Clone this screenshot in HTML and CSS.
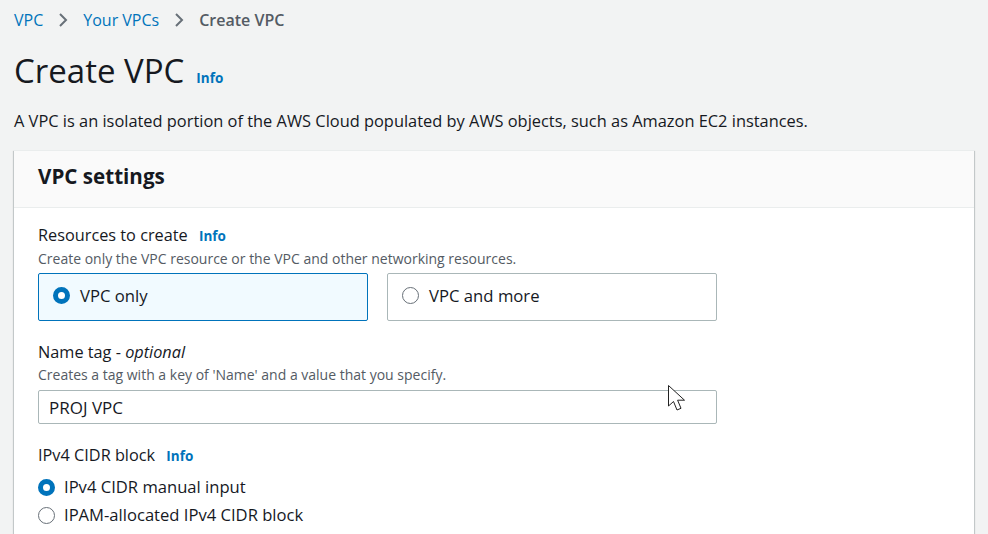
FILE: index.html
```html
<!DOCTYPE html>
<html lang="en">
<head>
<meta charset="utf-8">
<title>Create VPC</title>
<link rel="stylesheet" href="styles.css">
</head>
<body>
<div class="page">
  <nav class="crumbs">
    <a class="crumb-link">VPC</a>
    <svg class="chev" width="12" height="16" viewBox="0 0 12 16"><path d="M3 2 L9 8 L3 14" fill="none" stroke="#687078" stroke-width="2"/></svg>
    <a class="crumb-link">Your VPCs</a>
    <svg class="chev" width="12" height="16" viewBox="0 0 12 16"><path d="M3 2 L9 8 L3 14" fill="none" stroke="#687078" stroke-width="2"/></svg>
    <span class="crumb-current">Create VPC</span>
  </nav>
  <div class="title-row">
    <h1 class="title">Create VPC</h1>
    <span class="info">Info</span>
  </div>
  <p class="desc">A VPC is an isolated portion of the AWS Cloud populated by AWS objects, such as Amazon EC2 instances.</p>
  <section class="panel">
    <div class="panel-head">
      <h2 class="panel-title">VPC settings</h2>
    </div>
    <div class="panel-body">
      <div class="field">
        <div class="label">Resources to create <span class="info">Info</span></div>
        <div class="hint">Create only the VPC resource or the VPC and other networking resources.</div>
        <div class="tiles">
          <div class="tile tile-on"><span class="radio radio-on"></span><span>VPC only</span></div>
          <div class="tile"><span class="radio"></span><span>VPC and more</span></div>
        </div>
      </div>
      <div class="field">
        <div class="label">Name tag - <i>optional</i></div>
        <div class="hint">Creates a tag with a key of 'Name' and a value that you specify.</div>
        <div class="input-wrap">
          <div class="input">PROJ VPC</div>
          <svg class="cursor" width="24" height="30" viewBox="0 0 24 30"><path d="M1.5 1.5 L1.5 22 L6.5 17.5 L10 26 L14 24.3 L10.6 16.2 L17.5 16.2 Z" fill="#fff" stroke="#222" stroke-width="1" stroke-linejoin="round"/></svg>
        </div>
      </div>
      <div class="field">
        <div class="label">IPv4 CIDR block <span class="info">Info</span></div>
        <div class="radio-list">
          <div class="radio-item"><span class="radio radio-on"></span><span>IPv4 CIDR manual input</span></div>
          <div class="radio-item"><span class="radio"></span><span>IPAM-allocated IPv4 CIDR block</span></div>
        </div>
      </div>
    </div>
  </section>
</div>
</body>
</html>
```

FILE: styles.css
```css
* { box-sizing: border-box; }
html, body { margin: 0; padding: 0; }
body {
  background: #f2f3f3;
  font-family: "Open Sans", "Noto Sans", sans-serif;
  color: #16191f;
  overflow: hidden;
  height: 534px;
}
.page { padding: 8px 14px 0 14px; }
.crumbs {
  display: flex;
  align-items: center;
  gap: 14px;
  font-size: 16px;
  height: 24px;
}
.crumb-link { color: #0073bb; }
.crumb-current { color: #545b64; font-weight: 600; }
.chev { display: block; }
.title-row {
  display: flex;
  align-items: baseline;
  gap: 12px;
  margin-top: 19px;
}
.title {
  margin: 0;
  font-size: 33px;
  font-weight: 400;
  line-height: 40px;
}
.info {
  color: #0073bb;
  font-weight: 700;
  font-size: 13.5px;
}
.desc {
  margin: 18px 0 0 0;
  font-size: 16.4px;
  line-height: 24px;
}
.panel {
  margin-top: 17px;
  background: #fff;
  width: 960px;
  box-shadow: 0 1px 1px 0 rgba(0,28,36,.3), 1px 1px 1px 0 rgba(0,28,36,.15), -1px 1px 1px 0 rgba(0,28,36,.15);
  border-top: 1px solid #eaeded;
  height: 386px;
}
.panel-head {
  background: #fafafa;
  border-bottom: 1px solid #eaeded;
  height: 57px;
  display: flex;
  align-items: center;
  padding: 0 24px 6px 24px;
}
.panel-title {
  margin: 0;
  font-size: 20.6px;
  font-weight: 700;
}
.panel-body { padding: 15px 24px 0 24px; }
.field { margin-bottom: 19px; }
.label {
  font-size: 16.3px;
  line-height: 24px;
}
.label .info { margin-left: 7px; }
.hint {
  font-size: 14px;
  line-height: 20px;
  color: #545b64;
  margin-top: 1px;
}
.tiles {
  display: flex;
  gap: 19px;
  margin-top: 4px;
}
.tile {
  width: 330px;
  height: 48px;
  border: 1px solid #aab7b8;
  border-radius: 2px;
  display: flex;
  align-items: center;
  gap: 10px;
  padding: 0 14px 3px 14px;
  font-size: 16.7px;
}
.tile-on {
  background: #f1faff;
  border-color: #0073bb;
}
.radio {
  width: 17px;
  height: 17px;
  border-radius: 50%;
  border: 1px solid #687078;
  background: #fff;
  flex: none;
}
.radio-on {
  border: 5px solid #0073bb;
}
.input-wrap { position: relative; width: 679px; margin-top: 5px; }
.input {
  height: 34px;
  border: 1px solid #aab7b8;
  border-radius: 2px;
  display: flex;
  align-items: center;
  padding: 0 10px;
  font-size: 17px;
  background: #fff;
}
.cursor {
  position: absolute;
  left: 629px;
  top: -6px;
}
.radio-list {
  display: flex;
  flex-direction: column;
  gap: 6px;
  margin-top: 8px;
}
.radio-item {
  display: flex;
  align-items: center;
  gap: 9px;
  font-size: 16.6px;
  line-height: 22px;
}
```
